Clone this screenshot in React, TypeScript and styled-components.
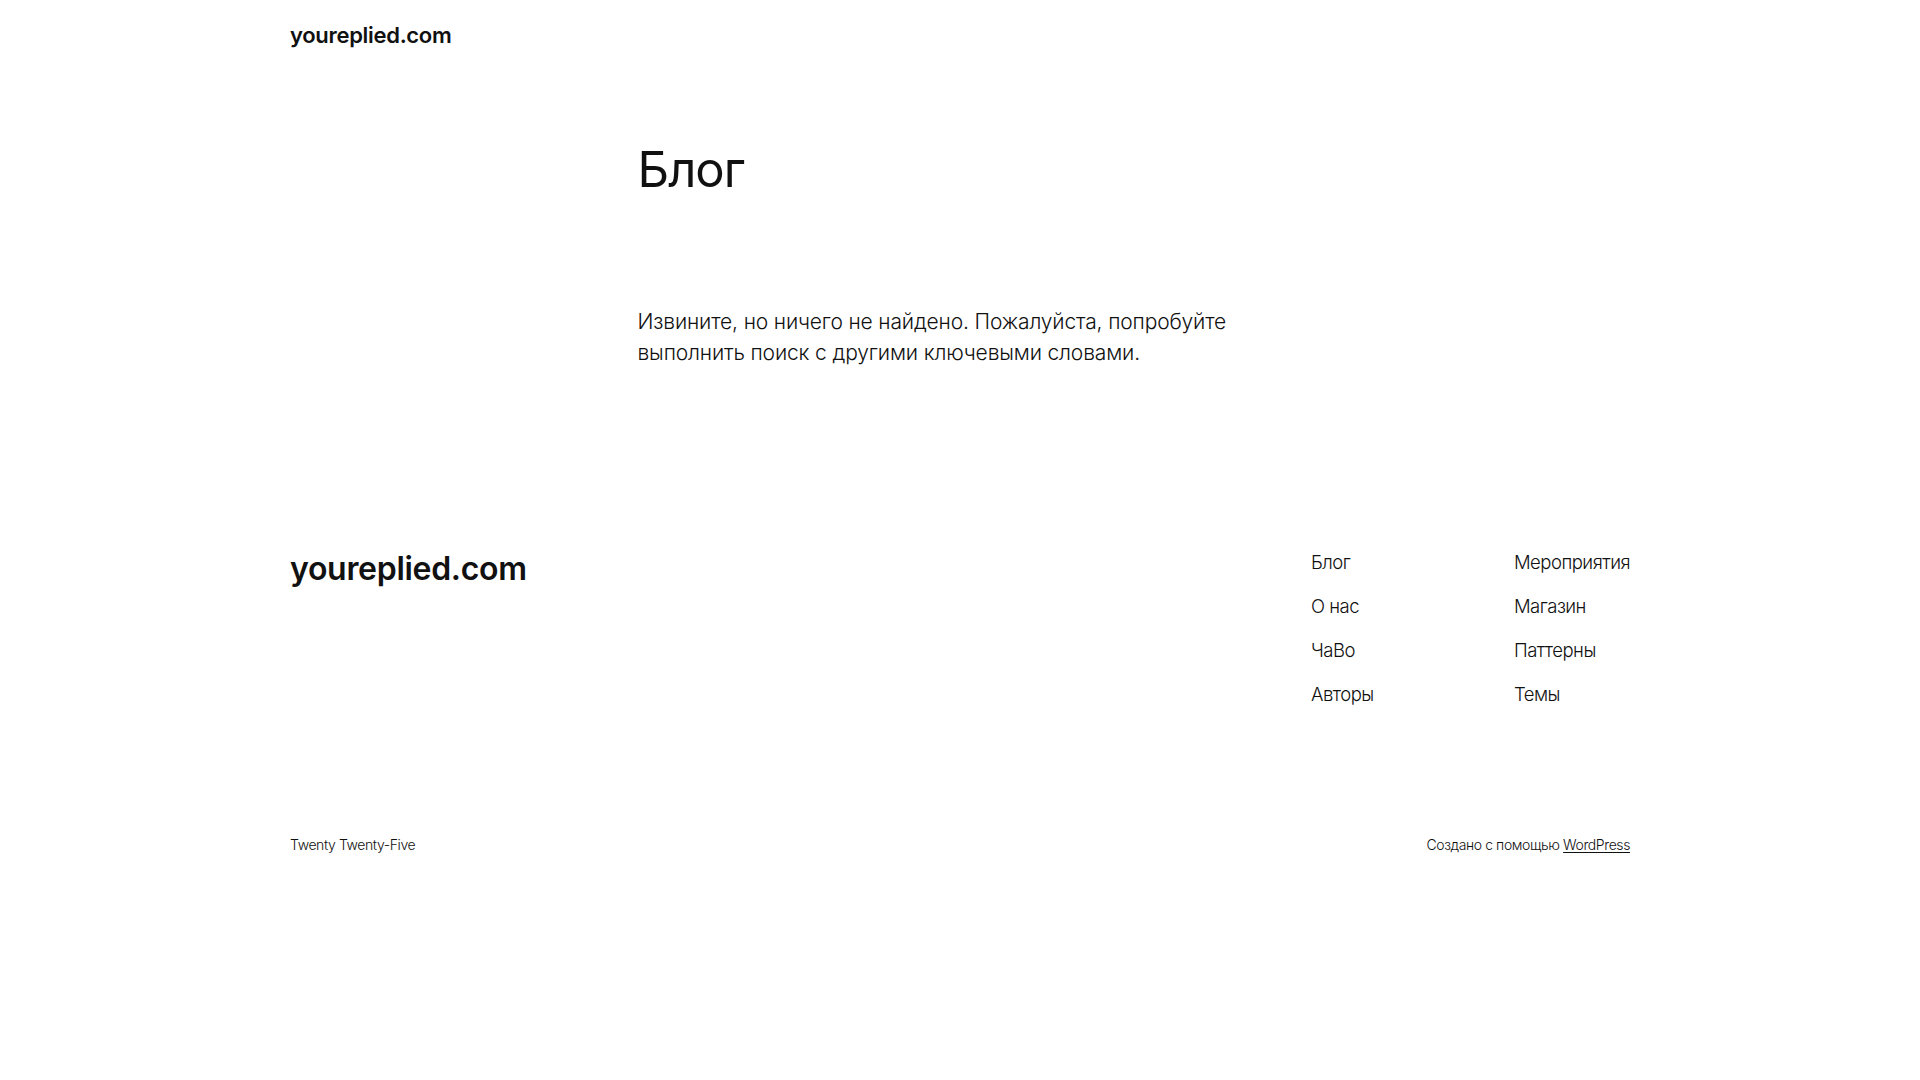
import React from "react";
import styled, { createGlobalStyle } from "styled-components";

const GlobalStyle = createGlobalStyle`
  html, body {
    margin: 0;
    padding: 0;
    background: #fff;
  }
  body {
    font-family: Inter, "Noto Sans", sans-serif;
    color: #111;
    -webkit-font-smoothing: antialiased;
  }
  * { box-sizing: border-box; }
`;

const Page = styled.div`
  width: 1920px;
  min-height: 1080px;
  display: flex;
  flex-direction: column;
`;

const Wide = styled.div`
  width: 1340px;
  margin: 0 auto;
`;

const Header = styled(Wide)`
  height: 70px;
  display: flex;
  align-items: center;
  padding-bottom: 1px;
`;

const SiteTitle = styled.a<{ $size: number }>`
  font-size: ${(p) => p.$size}px;
  font-weight: 600;
  letter-spacing: -0.3px;
  color: #111;
  text-decoration: none;
`;

const Main = styled.main`
  width: 645px;
  margin: 0 auto;
  padding-top: 71px;
  padding-bottom: 181px;
`;

const Title = styled.h1`
  margin: 0;
  font-size: 49px;
  font-weight: 400;
  letter-spacing: -1px;
  line-height: 1.2;
`;

const Message = styled.p`
  margin: 106px 0 0;
  font-size: 21px;
  line-height: 31px;
  font-weight: 300;
  letter-spacing: -0.15px;
`;

const Footer = styled(Wide)`
  display: flex;
  justify-content: space-between;
  align-items: flex-start;
`;

const NavGrid = styled.nav`
  display: grid;
  grid-template-columns: 203px auto;
  row-gap: 22px;
  padding-top: 2px;
`;

const NavLink = styled.a`
  font-size: 18.5px;
  line-height: 22px;
  font-weight: 300;
  letter-spacing: -0.5px;
  color: #111;
  text-decoration: none;
`;

const Bottom = styled(Wide)`
  display: flex;
  justify-content: space-between;
  margin-top: 131px;
  font-size: 14px;
  font-weight: 300;
  letter-spacing: -0.4px;
  color: #111;
`;

const Credit = styled.span`
  a {
    color: #111;
    text-decoration: underline;
    text-underline-offset: 2px;
  }
`;

const links = [
  "Блог",
  "Мероприятия",
  "О нас",
  "Магазин",
  "ЧаВо",
  "Паттерны",
  "Авторы",
  "Темы",
];

export default function App() {
  return (
    <Page>
      <GlobalStyle />
      <Header>
        <SiteTitle $size={22} href="#">youreplied.com</SiteTitle>
      </Header>
      <Main>
        <Title>Блог</Title>
        <Message>
          Извините, но ничего не найдено. Пожалуйста, попробуйте выполнить
          поиск с другими ключевыми словами.
        </Message>
      </Main>
      <Footer>
        <SiteTitle $size={32} href="#">youreplied.com</SiteTitle>
        <NavGrid>
          {links.map((l) => (
            <NavLink key={l} href="#">
              {l}
            </NavLink>
          ))}
        </NavGrid>
      </Footer>
      <Bottom>
        <span>Twenty Twenty-Five</span>
        <Credit>
          Создано с помощью <a href="#">WordPress</a>
        </Credit>
      </Bottom>
    </Page>
  );
}
